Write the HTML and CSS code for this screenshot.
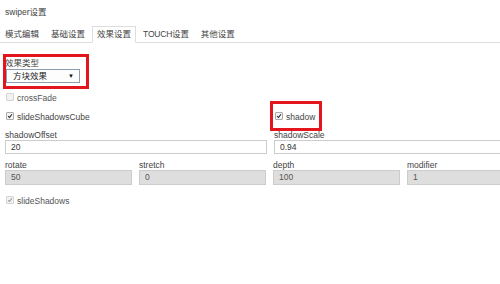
FILE: index.html
```html
<!DOCTYPE html>
<html lang="zh-CN">
<head>
    <meta charset="UTF-8">
    <title>swiper设置</title>
    <link rel="stylesheet" href="styles.css">
</head>
<body>
    <div class="page">
        <div class="title">swiper设置</div>

        <div class="tabs">
            <div class="tab">模式编辑</div>
            <div class="tab">基础设置</div>
            <div class="tab active">效果设置</div>
            <div class="tab">TOUCH设置</div>
            <div class="tab">其他设置</div>
        </div>

        <div class="panel">
            <div class="effect-group">
                <div class="field-label">效果类型</div>
                <div class="select">方块效果</div>
                <span class="mark mark-effect"></span>
            </div>

            <div class="check-row disabled">
                <span class="box"></span>
                <span>crossFade</span>
            </div>

            <div class="row2 check-line">
                <div class="check-row">
                    <span class="box checked"><svg viewBox="0 0 8 8"><path d="M1.5 4.2 L3.3 6 L6.6 1.6" /></svg></span>
                    <span>slideShadowsCube</span>
                </div>
                <div class="check-row shadow-cell">
                    <span class="box checked"><svg viewBox="0 0 8 8"><path d="M1.5 4.2 L3.3 6 L6.6 1.6" /></svg></span>
                    <span>shadow</span>
                    <span class="mark mark-shadow"></span>
                </div>
            </div>

            <div class="row2 fields">
                <div class="field">
                    <div class="field-label">shadowOffset</div>
                    <div class="input">20</div>
                </div>
                <div class="field">
                    <div class="field-label">shadowScale</div>
                    <div class="input">0.94</div>
                </div>
            </div>

            <div class="row4 fields">
                <div class="field">
                    <div class="field-label">rotate</div>
                    <div class="input readonly">50</div>
                </div>
                <div class="field">
                    <div class="field-label">stretch</div>
                    <div class="input readonly">0</div>
                </div>
                <div class="field">
                    <div class="field-label">depth</div>
                    <div class="input readonly">100</div>
                </div>
                <div class="field">
                    <div class="field-label">modifier</div>
                    <div class="input readonly">1</div>
                </div>
            </div>

            <div class="check-row disabled last">
                <span class="box checked"><svg viewBox="0 0 8 8"><path d="M1.5 4.2 L3.3 6 L6.6 1.6" /></svg></span>
                <span>slideShadows</span>
            </div>
        </div>
    </div>
</body>
</html>
```

FILE: styles.css
```css
* {
    margin: 0;
    padding: 0;
    box-sizing: border-box;
}

body {
    font-family: "Liberation Sans", "Noto Sans CJK SC", sans-serif;
    font-size: 8.5px;
    color: #444;
    background: #fff;
    overflow: hidden;
}

.page {
    width: 100%;
    height: 284px;
    overflow: hidden;
}

.title {
    padding-top: 6px;
    padding-left: 5px;
    line-height: 12px;
}

.tabs {
    display: flex;
    margin-top: 8px;
    height: 17px;
    border-bottom: 1px solid #ddd;
}

.tab {
    padding: 0 4px;
    margin-right: 2px;
    line-height: 15px;
    height: 17px;
    border: 1px solid transparent;
    color: #444;
    white-space: nowrap;
}

.tab.active {
    border-color: #ddd;
    border-bottom-color: #fff;
    background: #fff;
}

.tab:nth-child(4) {
    letter-spacing: -0.2px;
}

.panel {
    width: 541px;
    padding: 0 5px;
}

.effect-group {
    position: relative;
    margin-top: 15px;
    width: 80px;
}

.field-label {
    line-height: 10px;
    white-space: nowrap;
}

.select {
    position: relative;
    margin-top: 1px;
    margin-left: 1px;
    width: 74px;
    height: 14px;
    line-height: 12px;
    padding-left: 6px;
    border: 1px solid #8d9db2;
    background: #fdfdfd;
    color: #222;
}

.select::after {
    content: "▼";
    position: absolute;
    right: 5px;
    top: 0;
    font-size: 6px;
    color: #111;
}

.mark {
    position: absolute;
    border: 3px solid #e3151d;
    pointer-events: none;
}

.mark-effect {
    left: -2px;
    top: -4px;
    width: 86px;
    height: 35px;
}

.mark-shadow {
    left: -4px;
    top: -10px;
    width: 52px;
    height: 30px;
}

.check-row {
    position: relative;
    display: flex;
    align-items: center;
    gap: 3px;
    height: 12px;
    margin-top: 9px;
    padding-left: 1px;
}

.check-row.disabled {
    color: #555;
}

.check-row.last {
    margin-top: 10px;
}

.box {
    display: inline-block;
    width: 8px;
    height: 8px;
    margin-top: -2px;
    border: 1px solid #aaa;
    border-radius: 1px;
    background: #f4f4f4;
}

.box svg {
    display: block;
    width: 6px;
    height: 6px;
}

.box path {
    fill: none;
    stroke: #222;
    stroke-width: 1.4;
}

.disabled .box {
    border-color: #d4d4d4;
    background: #f2f2f2;
}

.disabled .box path {
    stroke: #999;
}

.row2 {
    display: grid;
    grid-template-columns: 262px 262px;
    column-gap: 7px;
}

.row4 {
    display: grid;
    grid-template-columns: repeat(4, 127px);
    column-gap: 7px;
}

.check-line {
    margin-top: 7px;
}

.check-line .check-row {
    margin-top: 0;
}

.fields {
    margin-top: 7px;
}

.row4.fields {
    margin-top: 6px;
}

.input {
    height: 14px;
    line-height: 12px;
    padding-left: 5px;
    border: 1px solid #ccc;
    background: #fff;
    color: #333;
}

.input.readonly {
    height: 15px;
    line-height: 13px;
    background: #dedede;
    border-color: #ccc;
    color: #555;
}
```
